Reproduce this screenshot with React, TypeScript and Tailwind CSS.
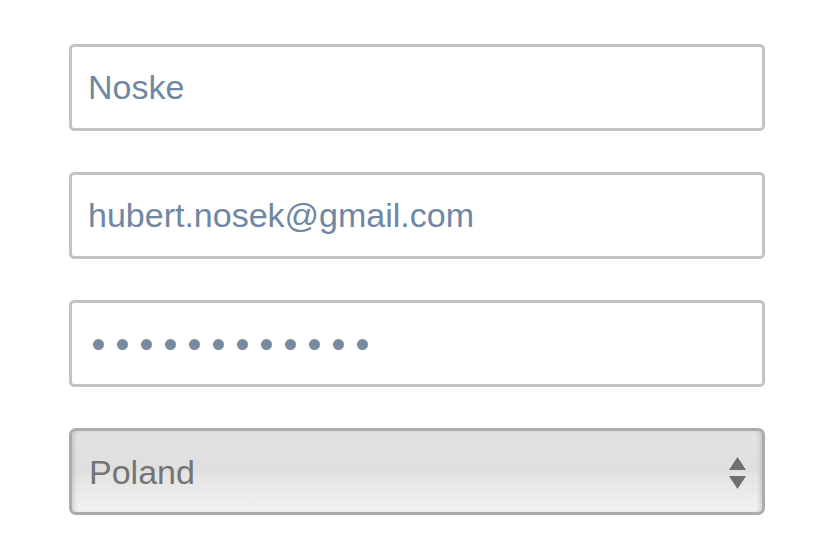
import React from "react";

const font = { fontFamily: '"Liberation Sans", Arial, sans-serif' };

function TextField({ value }: { value: string }) {
  return (
    <div className="h-[87px] w-[696px] rounded-[5px] border-[3px] border-[#c4c4c4] bg-white flex items-center pl-[16px]">
      <input
        readOnly
        value={value}
        className="w-full bg-transparent outline-none text-[34px] text-[#6f87a3] leading-none"
        style={font}
      />
    </div>
  );
}

function PasswordField() {
  return (
    <div className="h-[87px] w-[696px] rounded-[5px] border-[3px] border-[#c4c4c4] bg-white flex items-center pl-[21px]">
      <div className="flex gap-[13px] pt-[2px]">
        {Array.from({ length: 12 }).map((_, i) => (
          <span key={i} className="block h-[11px] w-[11px] rounded-full bg-[#7a8aa0]" />
        ))}
      </div>
    </div>
  );
}

function SelectField() {
  return (
    <div className="h-[87px] w-[696px] rounded-[7px] border-[3px] border-[#acacac] bg-[linear-gradient(to_bottom,#e3e3e3_0%,#dfdfdf_50%,#e3e3e3_52%,#f2f2f2_100%)] shadow-[inset_4px_0_4px_-2px_rgba(0,0,0,0.14),inset_-4px_0_4px_-2px_rgba(0,0,0,0.14)] flex items-center justify-between pl-[17px] pr-[16px]">
      <span className="text-[34px] text-[#747474] leading-none" style={font}>
        Poland
      </span>
      <svg width="17" height="32" viewBox="0 0 17 32" className="mt-[2px]">
        <polygon points="8.5,0 17,13 0,13" fill="#6f6f6f" />
        <polygon points="0,19 17,19 8.5,32" fill="#6f6f6f" />
      </svg>
    </div>
  );
}

export default function App() {
  return (
    <div className="h-[554px] w-[820px] bg-white pl-[69px] pt-[44px] flex flex-col gap-[41px]">
      <TextField value="Noske" />
      <TextField value="hubert.nosek@gmail.com" />
      <PasswordField />
      <SelectField />
    </div>
  );
}
